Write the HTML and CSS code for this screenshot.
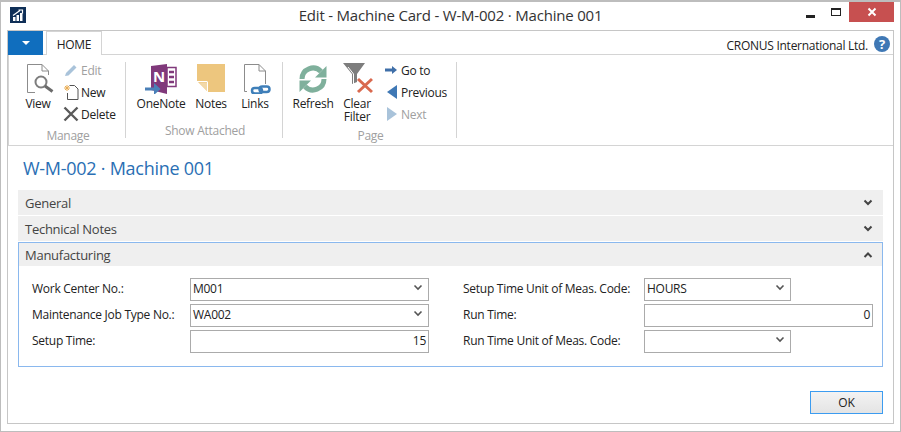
FILE: index.html
```html
<!DOCTYPE html>
<html lang="en">
  <head>
    <meta charset="UTF-8" />
    <title>Edit - Machine Card - W-M-002 · Machine 001</title>
    <link rel="stylesheet" href="styles.css">
  </head>
  <body>
    <div class="window">
      <div class="titlebar">
        <svg class="app-logo" width="16" height="16" viewBox="0 0 16 16">
          <rect width="16" height="16" fill="#0f2f57"/>
          <path d="M3 10h2.500v4H3zM6.500 8H9v6H6.500zM10 6h2.500v8H10z" fill="#fff"/>
          <path d="M3 8.500 10 3.500M8.500 3H12.500V6.500" fill="none" stroke="#fff" stroke-width="1.200"/>
        </svg>
        <div class="window-title">Edit - Machine Card - W-M-002 · Machine 001</div>
        <div class="window-controls">
          <div class="control"><span class="min-glyph"></span></div>
          <div class="control"><span class="max-glyph"></span></div>
          <div class="control close">
            <svg width="10" height="10" viewBox="0 0 10 10"><path d="M1.500 1.500 8.500 8.500M8.500 1.500 1.500 8.500" stroke="#fff" stroke-width="2"/></svg>
          </div>
        </div>
      </div>

      <div class="frame">
        <div class="tabs">
          <div class="file-tab"><span class="file-arrow"></span></div>
          <div class="tab">HOME</div>
          <div class="company">CRONUS International Ltd.</div>
          <div class="help">?</div>
        </div>

        <div class="ribbon">
          <div class="group group-manage">
            <div class="group-items">
              <div class="large view-btn">
                <svg width="32" height="32" viewBox="0 0 32 32">
                  <path d="M5.500 2.500H20L26.500 9V13M20 2.500V9H26.500M5.500 2.500V30.500H13" fill="none" stroke="#8c8c8c" stroke-width="1"/>
                  <circle cx="19" cy="20" r="5.500" fill="#fff" stroke="#7d7d7d" stroke-width="2"/>
                  <path d="M23 24 30.500 29.500" stroke="#6b6b6b" stroke-width="3"/>
                </svg>
                <span>View</span>
              </div>
              <div class="small-col">
                <div class="small disabled">
                  <svg width="16" height="16" viewBox="0 0 16 16"><path d="M3 11 11 3l2.500 2.500-8 8L2 14z" fill="#a9c3da"/></svg>
                  <span>Edit</span>
                </div>
                <div class="small">
                  <svg width="16" height="16" viewBox="0 0 16 16">
                    <path d="M6.500 1.500H11.500L15 5V15.500H4.500V9" fill="#fff" stroke="#555"/>
                    <path d="M4 1V7M1 4H7M2 2 6 6M6 2 2 6" stroke="#e9ad55"/>
                  </svg>
                  <span>New</span>
                </div>
                <div class="small">
                  <svg width="16" height="16" viewBox="0 0 16 16"><path d="M1.500 1.500 14.500 14.500M14.500 1.500 1.500 14.500" stroke="#5a5a5a" stroke-width="2.400"/></svg>
                  <span>Delete</span>
                </div>
              </div>
            </div>
            <div class="group-label">Manage</div>
          </div>

          <div class="group group-attached">
            <div class="group-items">
              <div class="large onenote-btn">
                <svg width="32" height="32" viewBox="0 0 32 32">
                  <path d="M22 5.500h9v19h-9z" fill="#fff" stroke="#80397b" stroke-width="1.500"/>
                  <path d="M24 10h5M24 15h5M24 20h5" stroke="#80397b" stroke-width="2.500"/>
                  <path d="M6 4 22 2V32L6 28z" fill="#80397b"/>
                  <text x="8" y="20" class="onenote-n">N</text>
                  <path d="M0 27H10" stroke="#4a80b8" stroke-width="3"/>
                  <path d="M9 21 15.500 27 9 33z" fill="#4a80b8"/>
                </svg>
                <span>OneNote</span>
              </div>
              <div class="large notes-btn">
                <svg width="32" height="32" viewBox="0 0 32 32">
                  <path d="M2 2H30V30H13L2 19z" fill="#edc67e"/>
                  <path d="M4 20.500H12V29z" fill="#f3d9a8"/>
                  <path d="M12.500 20V30M2 19.500H12.500" stroke="#fff" stroke-width="1"/>
                </svg>
                <span>Notes</span>
              </div>
              <div class="large links-btn">
                <svg width="32" height="32" viewBox="0 0 32 32">
                  <path d="M8 29.500H5.500V2.500H20L26.500 9V22M20 2.500V9H26.500" fill="none" stroke="#8c8c8c"/>
                  <rect x="13" y="26" width="10" height="5.500" rx="2.700" fill="none" stroke="#3f7fb9" stroke-width="2.500"/>
                  <rect x="20.500" y="24.500" width="10" height="5.500" rx="2.700" fill="none" stroke="#3f7fb9" stroke-width="2.500"/>
                </svg>
                <span>Links</span>
              </div>
            </div>
            <div class="group-label">Show Attached</div>
          </div>

          <div class="group group-page">
            <div class="group-items">
              <div class="large refresh-btn">
                <svg width="32" height="32" viewBox="0 0 32 32">
                  <path d="M5 17A11 11 0 0 1 24 9.500" fill="none" stroke="#7fb09c" stroke-width="5"/>
                  <path d="M29.500 4V15.500H18z" fill="#7fb09c"/>
                  <g transform="rotate(180 16 17)">
                    <path d="M5 17A11 11 0 0 1 24 9.500" fill="none" stroke="#7fb09c" stroke-width="5"/>
                    <path d="M29.500 4V15.500H18z" fill="#7fb09c"/>
                  </g>
                </svg>
                <span>Refresh</span>
              </div>
              <div class="large clear-btn">
                <svg width="32" height="32" viewBox="0 0 32 32">
                  <path d="M2 1H24L16 12V20L11 22V12z" fill="#7d7d7d"/>
                  <path d="M7 5 12.500 12V22" fill="none" stroke="#fff" stroke-width="1"/>
                  <path d="M17 17 31 30M31 17 17 30" stroke="#d9694f" stroke-width="3"/>
                </svg>
                <span>Clear<br>Filter</span>
              </div>
              <div class="small-col">
                <div class="small">
                  <svg width="16" height="16" viewBox="0 0 16 16"><path d="M2 8H10" stroke="#3f6fa8" stroke-width="3"/><path d="M9 4 14 8 9 12z" fill="#3f6fa8"/></svg>
                  <span>Go to</span>
                </div>
                <div class="small">
                  <svg width="16" height="16" viewBox="0 0 16 16"><path d="M14 1V15L4 8z" fill="#3f78b5"/></svg>
                  <span>Previous</span>
                </div>
                <div class="small disabled">
                  <svg width="16" height="16" viewBox="0 0 16 16"><path d="M4 1V15L14 8z" fill="#a9c3da"/></svg>
                  <span>Next</span>
                </div>
              </div>
            </div>
            <div class="group-label">Page</div>
          </div>
        </div>

        <div class="content">
          <h1 class="page-title">W-M-002 · Machine 001</h1>

          <div class="section-bar">
            <span>General</span>
            <svg class="chevron" width="10" height="8" viewBox="0 0 10 8"><path d="M1.500 1.500 5 5 8.500 1.500" fill="none" stroke="#444" stroke-width="2"/></svg>
          </div>
          <div class="section-bar">
            <span>Technical Notes</span>
            <svg class="chevron" width="10" height="8" viewBox="0 0 10 8"><path d="M1.500 1.500 5 5 8.500 1.500" fill="none" stroke="#444" stroke-width="2"/></svg>
          </div>

          <div class="section-open">
            <div class="section-bar section-head">
              <span>Manufacturing</span>
              <svg class="chevron" width="10" height="8" viewBox="0 0 10 8"><path d="M1.500 6 5 2.500 8.500 6" fill="none" stroke="#444" stroke-width="2"/></svg>
            </div>
            <div class="fields">
              <div class="field-col left-col">
                <div class="field">
                  <label>Work Center No.:</label>
                  <div class="input wide"><span>M001</span><svg width="10" height="8" viewBox="0 0 10 8"><path d="M1.500 1.500 5 5 8.500 1.500" fill="none" stroke="#555" stroke-width="1.600"/></svg></div>
                </div>
                <div class="field">
                  <label>Maintenance Job Type No.:</label>
                  <div class="input wide"><span>WA002</span><svg width="10" height="8" viewBox="0 0 10 8"><path d="M1.500 1.500 5 5 8.500 1.500" fill="none" stroke="#555" stroke-width="1.600"/></svg></div>
                </div>
                <div class="field">
                  <label>Setup Time:</label>
                  <div class="input wide number">15</div>
                </div>
              </div>
              <div class="field-col right-col">
                <div class="field">
                  <label>Setup Time Unit of Meas. Code:</label>
                  <div class="input short"><span>HOURS</span><svg width="10" height="8" viewBox="0 0 10 8"><path d="M1.500 1.500 5 5 8.500 1.500" fill="none" stroke="#555" stroke-width="1.600"/></svg></div>
                </div>
                <div class="field">
                  <label>Run Time:</label>
                  <div class="input long number">0</div>
                </div>
                <div class="field">
                  <label>Run Time Unit of Meas. Code:</label>
                  <div class="input short"><span></span><svg width="10" height="8" viewBox="0 0 10 8"><path d="M1.500 1.500 5 5 8.500 1.500" fill="none" stroke="#555" stroke-width="1.600"/></svg></div>
                </div>
              </div>
            </div>
          </div>

          <div class="footer">
            <button class="ok-btn" type="button">OK</button>
          </div>
        </div>
      </div>
    </div>
  </body>
</html>
```

FILE: styles.css
```css
* {
  box-sizing: border-box;
}

html,
body {
  margin: 0;
  height: 100%;
  overflow: hidden;
}

body {
  background-color: #fff;
  color: #222;
  font-family: "Open Sans", "Noto Sans", sans-serif;
  font-size: 12px;
  letter-spacing: -0.27px;
}

.window {
  display: flex;
  flex-direction: column;
  width: 901px;
  height: 432px;
  padding: 0 6px 7px 6px;
  border: 1px solid #bdbdbd;
  border-top-width: 2px;
}

/* title bar */
.titlebar {
  display: grid;
  grid-template-columns: 1fr auto 1fr;
  align-items: center;
  height: 28px;
  flex-shrink: 0;
}

.app-logo {
  margin: -3px 0 0 3px;
}

.window-title {
  font-size: 15px;
  letter-spacing: -0.2px;
  margin-top: -3px;
  color: #333;
}

.window-controls {
  display: flex;
  align-self: start;
  justify-self: end;
}

.control {
  display: flex;
  align-items: center;
  justify-content: center;
  width: 26px;
  height: 20px;
}

.control.close {
  width: 45px;
  background-color: #c75050;
}

.min-glyph {
  width: 9px;
  height: 3px;
  margin-top: 8px;
  background-color: #222;
}

.max-glyph {
  width: 10px;
  height: 8px;
  border: 1px solid #222;
  border-top-width: 2px;
}

/* frame + ribbon */
.frame {
  flex: 1;
  display: flex;
  flex-direction: column;
  border: 1px solid #c6c6c6;
  min-height: 0;
}

.tabs {
  display: flex;
  align-items: flex-end;
  height: 24px;
  flex-shrink: 0;
  border-bottom: 1px solid #d4d4d4;
}

.file-tab {
  display: flex;
  align-items: center;
  justify-content: center;
  width: 35px;
  height: 24px;
  margin-bottom: -1px;
  background-color: #106ebe;
}

.file-arrow {
  width: 0;
  height: 0;
  border-left: 4px solid transparent;
  border-right: 4px solid transparent;
  border-top: 4px solid #fff;
}

.tab {
  display: flex;
  align-items: center;
  justify-content: center;
  width: 56px;
  height: 24px;
  margin: 0 0 -1px 3px;
  padding-top: 2px;
  background-color: #fff;
  border: 1px solid #d4d4d4;
  border-bottom: none;
}

.company {
  margin-left: auto;
  padding-bottom: 0;
}

.help {
  display: flex;
  align-items: center;
  justify-content: center;
  width: 16px;
  height: 16px;
  margin: 0 3px 2px 6px;
  border-radius: 50%;
  background-color: #3f78b5;
  color: #fff;
  font-size: 13px;
  font-weight: 700;
}

.ribbon {
  display: flex;
  height: 91px;
  flex-shrink: 0;
  border-bottom: 1px solid #d4d4d4;
  border-left: 1px solid #d4d4d4;
}

.group {
  display: flex;
  flex-direction: column;
  margin: 7px 0;
  border-right: 1px solid #d4d4d4;
}

.group-manage {
  width: 117px;
  padding-left: 14px;
}

.group-attached {
  width: 157px;
  padding-left: 10px;
}

.group-page {
  width: 174px;
  padding-left: 10px;
}

.group-items {
  display: flex;
  flex: 1;
}

.group-label {
  height: 16px;
  margin-top: 2px;
  padding-left: 2px;
  text-align: center;
  color: #a0a0a0;
}

.group-manage .group-label {
  margin-left: -14px;
}

.group-attached .group-label,
.group-page .group-label {
  margin-left: -10px;
}

.large {
  display: flex;
  flex-direction: column;
  align-items: center;
  line-height: 13px;
  text-align: center;
}

.large svg {
  display: block;
  flex-shrink: 0;
  margin-bottom: 3px;
}

.view-btn {
  width: 30px;
}

.onenote-btn {
  width: 50px;
}

.notes-btn {
  width: 34px;
  margin-left: 8px;
}

.links-btn {
  width: 32px;
  margin-left: 11px;
}

.refresh-btn {
  width: 40px;
}

.clear-btn {
  width: 32px;
  margin-left: 8px;
}

.small-col {
  display: flex;
  flex-direction: column;
  margin: -3px 0 0 10px;
}

.small {
  display: flex;
  align-items: center;
  gap: 2px;
  height: 22px;
}

.small.disabled {
  color: #a0a0a0;
}

.onenote-n {
  fill: #fff;
  font-family: "Open Sans", sans-serif;
  font-size: 15px;
  font-weight: 700;
}

/* page body */
.content {
  flex: 1;
  display: flex;
  flex-direction: column;
  padding: 0 10px;
  min-height: 0;
}

.page-title {
  margin: 10px 0 10px 5px;
  height: 24px;
  font-size: 18px;
  font-weight: 400;
  line-height: 24px;
  color: #2a6fb4;
}

.section-bar {
  display: flex;
  align-items: center;
  justify-content: space-between;
  height: 25px;
  margin-bottom: 1px;
  padding: 0 10px 0 7px;
  background-color: #efefef;
  font-size: 13px;
  color: #444;
}

.section-open {
  height: 125px;
  border: 1px solid #8ab8ee;
}

.section-head {
  height: 23px;
  margin: 0;
  padding: 0 9px 0 6px;
}

.fields {
  display: flex;
  padding-top: 12px;
}

.field-col {
  display: flex;
  flex-direction: column;
  gap: 4px;
}

.left-col {
  width: 444px;
  padding-left: 13px;
}

.field {
  display: flex;
  align-items: center;
  height: 22px;
}

.field label {
  padding-bottom: 2px;
}

.left-col label {
  width: 158px;
}

.right-col label {
  width: 181px;
}

.input {
  display: flex;
  align-items: center;
  justify-content: space-between;
  height: 23px;
  padding: 0 5px 2px 2px;
  border: 1px solid #ababab;
  background-color: #fff;
  color: #222;
}

.input.wide {
  width: 239px;
}

.input.short {
  width: 147px;
}

.input.long {
  width: 229px;
}

.input.number {
  justify-content: flex-end;
  padding-right: 2px;
}

.footer {
  display: flex;
  justify-content: flex-end;
  padding-top: 24px;
}

.ok-btn {
  width: 73px;
  height: 23px;
  padding-top: 1px;
  border: 1px solid #3c9cf0;
  background: linear-gradient(#f3f3f3, #e4e4e4);
  color: #222;
  font-family: inherit;
  font-size: 12px;
}
```
